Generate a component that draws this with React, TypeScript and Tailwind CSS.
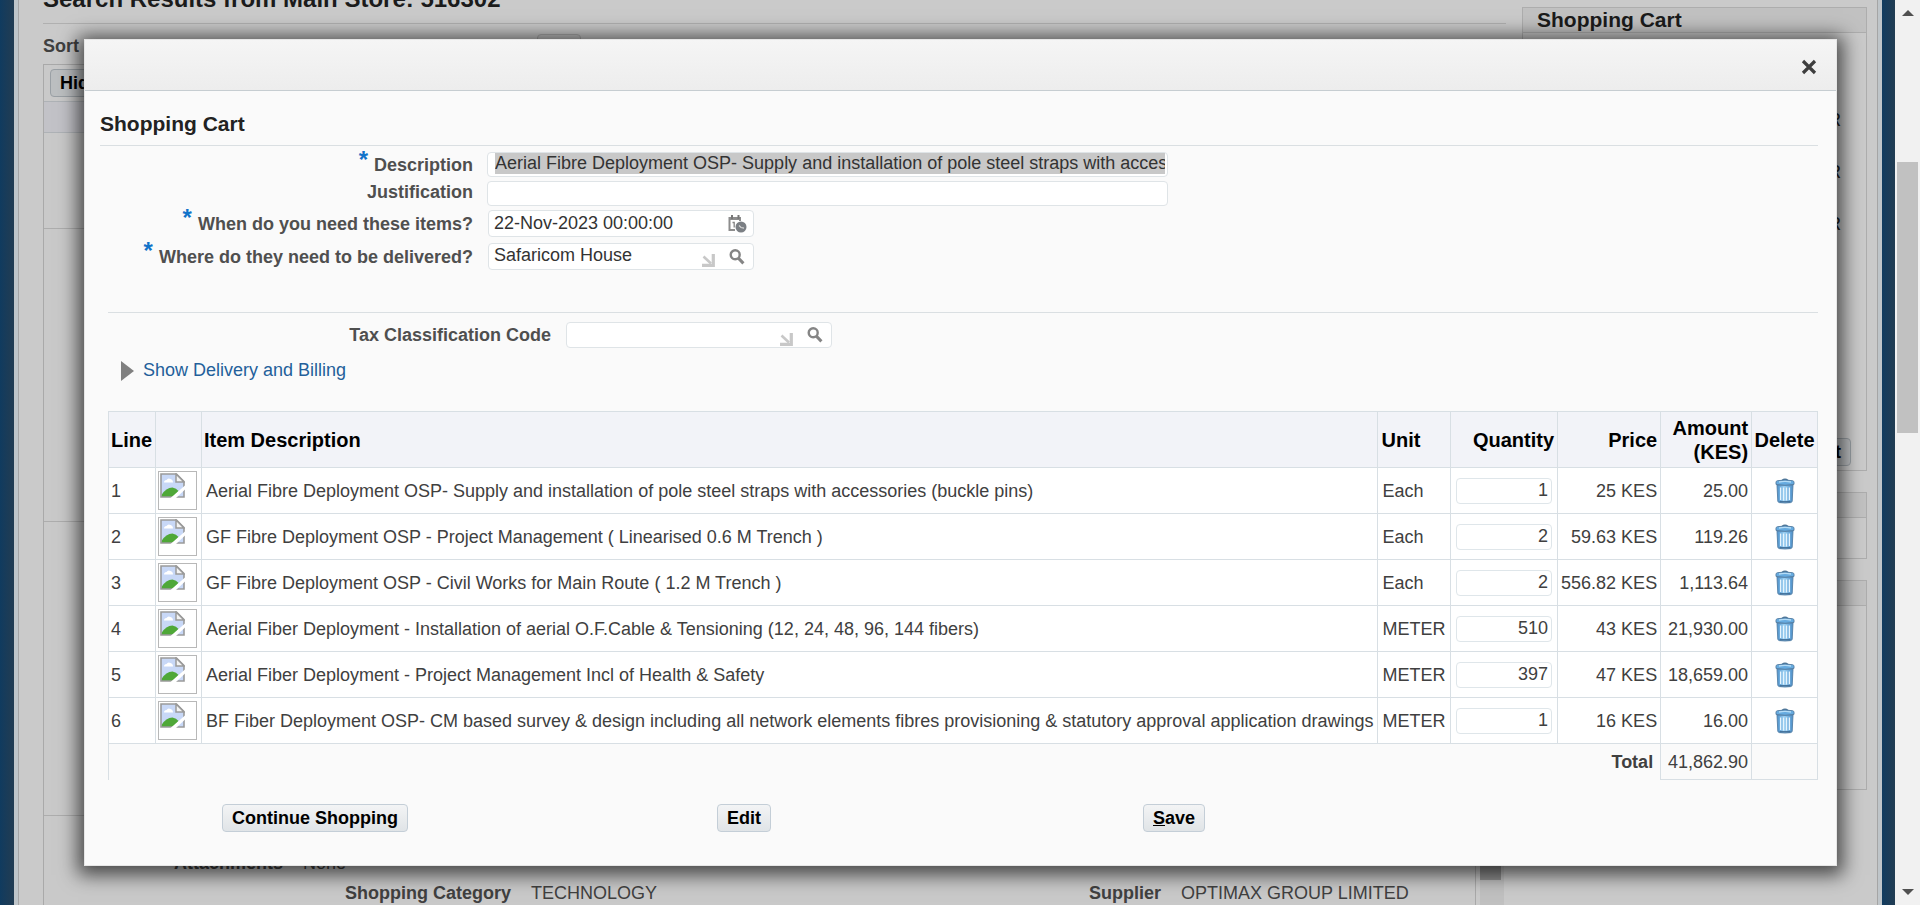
import React from "react";

const items = [
  { line: 1, desc: "Aerial Fibre Deployment OSP- Supply and installation of pole steel straps with accessories (buckle pins)", unit: "Each", qty: "1", price: "25 KES", amount: "25.00" },
  { line: 2, desc: "GF Fibre Deployment OSP - Project Management ( Linearised 0.6 M Trench )", unit: "Each", qty: "2", price: "59.63 KES", amount: "119.26" },
  { line: 3, desc: "GF Fibre Deployment OSP - Civil Works for Main Route ( 1.2 M Trench )", unit: "Each", qty: "2", price: "556.82 KES", amount: "1,113.64" },
  { line: 4, desc: "Aerial Fiber Deployment - Installation of aerial O.F.Cable & Tensioning (12, 24, 48, 96, 144 fibers)", unit: "METER", qty: "510", price: "43 KES", amount: "21,930.00" },
  { line: 5, desc: "Aerial Fiber Deployment - Project Management Incl of Health & Safety", unit: "METER", qty: "397", price: "47 KES", amount: "18,659.00" },
  { line: 6, desc: "BF Fiber Deployment OSP- CM based survey & design including all network elements fibres provisioning & statutory approval application drawings", unit: "METER", qty: "1", price: "16 KES", amount: "16.00" },
];

function SearchIcon() {
  return (
    <svg width="16" height="16" viewBox="0 0 16 16" fill="none" stroke="#858585" aria-hidden="true">
      <circle cx="6.2" cy="5.8" r="4.5" strokeWidth="2.4" />
      <path d="M9.6 9.4 14.4 14.4" strokeWidth="3" />
    </svg>
  );
}

function CornerArrow() {
  return (
    <svg width="13" height="13" viewBox="0 0 13 13" fill="none" stroke="#c8c8c8" aria-hidden="true">
      <path d="M1.500 2.500 9 9.500" strokeWidth="2.600" />
      <path d="M11.300 0V11.300H0" strokeWidth="3.200" />
    </svg>
  );
}

function CalendarIcon() {
  return (
    <svg width="19" height="18" viewBox="0 0 19 18" aria-hidden="true">
      <path d="M.5 2h12.500v4h-2V5H2.500v9H7v2H.5z" fill="#8d8d8d" />
      <path d="M3 0h2v4H3zM9.500 0h2v4h-2z" fill="#777" />
      <path d="M4.500 7.500h1.700v5" fill="none" stroke="#858585" strokeWidth="1.300" />
      <circle cx="13" cy="12" r="5.500" fill="#7b7f84" />
      <path d="M11 10.500l2 2 3 .6" fill="none" stroke="#d8d8d8" strokeWidth="1.100" />
    </svg>
  );
}

function TrashIcon() {
  return (
    <svg width="20" height="26" viewBox="0 0 20 26" aria-hidden="true">
      <defs>
        <linearGradient id="bin" x1="0" x2="1">
          <stop offset="0" stopColor="#4a8fca" />
          <stop offset=".45" stopColor="#9bd0f3" />
          <stop offset="1" stopColor="#4a8dc8" />
        </linearGradient>
      </defs>
      <path d="M7 2.6Q10 .2 13 2.6" fill="none" stroke="#4d7597" strokeWidth="1.6" />
      <path d="M2 7h16l-.8 16q-.1 1.400-1.600 1.600-5.600.8-11.200 0-1.500-.2-1.600-1.600z" fill="url(#bin)" stroke="#527fa6" strokeWidth=".9" />
      <path d="M5.600 9.500V22M8.500 9.500V22.500M11.500 9.500V22.500M14.400 9.500V22" stroke="#e6f4fd" strokeWidth="1.300" />
      <path d="M4.500 23.800h11" stroke="#3f6d96" strokeWidth="1.400" />
      <path d="M1 4.200Q1 3 2.400 2.700 10 1.400 17.600 2.700 19 3 19 4.200V6.400Q10 8.200 1 6.400z" fill="#66abe0" stroke="#527b9f" strokeWidth=".9" />
      <path d="M4 4Q10 2.800 16 4" fill="none" stroke="#b5dcf6" strokeWidth="1.300" />
    </svg>
  );
}

function BrokenImage() {
  return (
    <svg width="25" height="25" viewBox="0 0 25 25" aria-hidden="true">
      <path d="M1 1h15.500l7.500 7.500V24H1z" fill="#c8d8f7" />
      <path d="M4 9.500q0-2.500 2.500-2.500Q8 4.500 10.500 6 13 6.500 13 9.500z" fill="#fff" />
      <path d="M1.500 24V22Q6 14.500 12.500 14.500 16.500 15 18.500 18L13 24z" fill="#4fa838" />
      <path d="M1 1h15.500l7.500 7.500V24H1z" fill="none" stroke="#9a9a9a" strokeWidth="1.600" />
      <path d="M16 1v8h8z" fill="#f4f4f4" stroke="#9a9a9a" strokeWidth="1.500" />
      <path d="M10.500 25 25 12.500V16.500L16 25z" fill="#fff" />
    </svg>
  );
}

function Star() {
  return <span className="mr-1.5 self-start text-2xl leading-4 font-bold text-[#1273c9]">*</span>;
}

const field = "flex items-center rounded-sm border border-[#dfe4e7] bg-white";
const label = "flex w-[373px] shrink-0 items-center justify-end font-bold text-[#4f4f4f]";
const input = "min-w-0 bg-transparent text-[#333] outline-none";
const button = "h-7 rounded-sm border border-[#c4ced7] bg-linear-to-b from-[#f3f4f5] to-[#e0e4e7] px-[9px] font-bold text-black";
const cell = "border border-[#d8dfe4]";
const boxTitle = "h-[25px] border-b border-[#adadad] bg-[#c1c1c1] px-3.5 text-[21px] leading-6 font-bold text-[#1b1b1b]";

function SideBox({ className }: { className: string }) {
  return (
    <section className={"border border-[#adadad] " + className}>
      <div className={boxTitle} />
    </section>
  );
}

function StorePage() {
  return (
    <div className="flex h-full min-w-0 flex-1 bg-[#123a5b]" aria-hidden="true">
      <div className="w-3.5 shrink-0 bg-linear-to-r from-[#103b5f] to-[#213c52]" />
      <div className="flex min-w-0 flex-1 border-x-4 border-[#bfc5c9] bg-[#cacaca]">
        <div className="flex min-w-0 flex-1 border-x border-[#a5a5a5] pl-6">
          <main className="flex min-w-0 flex-1 flex-col">
            <div className="flex h-6 items-end border-b border-[#b0b0b0]">
              <h1 className="mb-3 text-2xl leading-6 font-bold text-[#1b1b1b]">Search Results from Main Store: 516302</h1>
            </div>
            <div className="flex h-10 pt-2.5">
              <span className="font-bold leading-6 text-[#404040]">Sort</span>
              <span className="ml-[458px] h-6 w-11 rounded-sm border border-[#aaa] bg-[#c3c3c3]" />
            </div>
            <div className="flex min-h-0 flex-1">
              <div className="flex min-w-0 flex-1 flex-col border border-b-0 border-[#a9a9a9] bg-[#c9c9c9]">
                <div className="flex h-[39px] items-center pl-1.5">
                  <span className="h-7 rounded-sm border border-[#9aa0a5] bg-[#bcbfc1] px-[9px] font-bold leading-[26px] text-black">Hide</span>
                </div>
                <div className="h-8 shrink-0 border-y border-[#aeb2b6] bg-[#c2c2c7]" />
                <div className="h-24 shrink-0 border-b border-[#adadad]" />
                <div className="h-[293px] shrink-0 border-b border-[#adadad]" />
                <div className="h-[294px] shrink-0 border-b border-[#adadad]" />
                <div className="flex h-[59px] shrink-0 items-end text-[#404040]">
                  <b className="w-[239px] text-right">Attachments</b>
                  <span className="ml-5">None</span>
                </div>
                <div className="flex h-[30px] shrink-0 items-end text-[#404040]">
                  <b className="w-[467px] text-right">Shopping Category</b>
                  <span className="ml-5 w-[450px]">TECHNOLOGY</span>
                  <b className="w-[180px] text-right">Supplier</b>
                  <span className="ml-5">OPTIMAX GROUP LIMITED</span>
                </div>
              </div>
              <div className="mr-0.5 ml-1 w-6 bg-[#c0c0c0]">
                <div className="h-[816px] w-[21px] bg-[#909090]" />
              </div>
            </div>
          </main>
          <aside className="mr-2.5 ml-4 flex w-[345px] flex-col pt-[7px]">
            <section className="flex h-[464px] flex-col border border-[#adadad]">
              <h2 className={boxTitle}>Shopping Cart</h2>
              <div className="mt-[75px] flex flex-1 flex-col gap-7 pr-[25px] text-right text-[#222]">
                <span>METER</span>
                <span>METER</span>
                <span>METER</span>
              </div>
              <span className="mr-[15px] mb-1 h-7 self-end rounded-sm border border-[#9aa0a5] bg-[#bcbfc1] px-[9px] font-bold leading-[26px] text-black">Checkout</span>
            </section>
            <SideBox className="mt-[21px] h-[67px]" />
            <SideBox className="mt-[21px] h-[210px]" />
          </aside>
        </div>
      </div>
      <div className="w-[13px] shrink-0 bg-linear-to-r from-[#103b5f] to-[#213c52]" />
    </div>
  );
}

function Scrollbar() {
  return (
    <div className="flex w-[25px] shrink-0 flex-col items-center justify-between bg-[#f1f1f1] py-2.5" aria-hidden="true">
      <div className="flex flex-col items-center">
        <svg width="12" height="6" viewBox="0 0 12 6"><path d="M0 6 6 0l6 6z" fill="#505050" /></svg>
        <div className="mt-[146px] h-[271px] w-[21px] bg-[#c1c1c1]" />
      </div>
      <svg width="12" height="6" viewBox="0 0 12 6"><path d="M0 0 6 6l6-6z" fill="#505050" /></svg>
    </div>
  );
}

function CartDialog() {
  return (
    <div role="dialog" aria-label="Shopping Cart" className="absolute top-[39px] right-[83px] left-[84px] border border-[#e6e6e6] bg-[#fafafa] shadow-[0_3px_18px_6px_rgba(0,0,0,0.65)]">
      <div className="flex h-[51px] items-center justify-end border-b border-[#c6cdd1] bg-linear-to-b from-[#f5f5f5] to-[#ededed] pt-1 pr-[19px]">
        <button type="button" aria-label="Close">
          <svg width="16" height="16" viewBox="0 0 16 16" stroke="#3e3e3e" strokeWidth="3.200"><path d="m2 2 12 12M14 2 2 14" /></svg>
        </button>
      </div>
      <div className="pt-[15px] pr-[18px] pb-[33px] pl-[15px]">
        <h1 className="h-10 border-b border-[#dadfe2] pt-1 text-[21px] leading-7 font-bold text-[#222]">Shopping Cart</h1>

        <div className="mt-1.5 flex flex-col">
          <div className="flex h-[29px]">
            <label htmlFor="description" className={label + " h-[26px]"}><Star />Description</label>
            <div className={field + " ml-3.5 h-[25px] w-[681px] pr-0.5 pb-0.5 pl-[7px]"}>
              <input id="description" readOnly className={input + " h-[21px] flex-1 bg-[#c8c8c8]! pb-0.5"} defaultValue={items[0].desc} />
            </div>
          </div>
          <div className="flex h-[29px]">
            <label htmlFor="justification" className={label + " h-[22px]"}>Justification</label>
            <div className={field + " ml-3.5 h-[25px] w-[681px] px-1.5"}>
              <input id="justification" className={input + " flex-1"} />
            </div>
          </div>
          <div className="flex h-[33px]">
            <label htmlFor="needby" className={label + " h-[27px]"}><Star />When do you need these items?</label>
            <div className={field + " ml-[15px] h-[27px] w-[266px] pr-1.5 pl-[5px]"}>
              <input id="needby" className={input + " h-6 flex-1 pb-0.5"} defaultValue="22-Nov-2023 00:00:00" />
              <button type="button" aria-label="Pick date"><CalendarIcon /></button>
            </div>
          </div>
          <div className="flex h-[33px]">
            <label htmlFor="deliver" className={label + " h-7"}><Star />Where do they need to be delivered?</label>
            <div className={field + " ml-[15px] h-[27px] w-[266px] pr-2 pl-[5px]"}>
              <input id="deliver" className={input + " h-6 flex-1 pb-1"} defaultValue="Safaricom House" />
              <span className="mr-3.5 pt-2"><CornerArrow /></span>
              <button type="button" aria-label="Search locations"><SearchIcon /></button>
            </div>
          </div>
        </div>

        <div className="ml-2">
          <div className="mt-9 flex h-9 border-t border-[#dadfe2] pt-[9px]">
            <label htmlFor="tax" className="flex w-[443px] shrink-0 items-center justify-end font-bold text-[#4f4f4f]">Tax Classification Code</label>
            <div className={field + " ml-[15px] h-[26px] w-[266px] pr-2 pl-1.5"}>
              <input id="tax" className={input + " flex-1"} />
              <span className="mr-3.5 pt-2"><CornerArrow /></span>
              <button type="button" aria-label="Search tax codes"><SearchIcon /></button>
            </div>
          </div>
          <div className="mt-[11px] flex h-6 items-center gap-[9px] pl-[13px]">
            <svg width="13" height="20" viewBox="0 0 13 20"><path d="M0 0v20L13 10z" fill="#808080" /></svg>
            <a href="#delivery" className="pb-0.5 text-[#235f9a]">Show Delivery and Billing</a>
          </div>

          <table className="mt-7 w-full border-collapse text-[#404040]">
            <thead>
              <tr className="h-14 bg-[#f2f3f8] text-[20px] leading-6 font-bold text-black">
                <th className={cell + " w-[47px] px-0.5 text-left"}>Line</th>
                <th className={cell + " w-[46px]"} aria-label="Image" />
                <th className={cell + " px-0.5 text-left"}>Item Description</th>
                <th className={cell + " w-[73px] px-[3px] text-left"}>Unit</th>
                <th className={cell + " w-[107px] px-[3px] text-right"}>Quantity</th>
                <th className={cell + " w-[102px] px-[3px] text-right"}>Price</th>
                <th className={cell + " w-[91px] px-[3px] text-right"}>Amount (KES)</th>
                <th className={cell + " w-[66px] text-center"}>Delete</th>
              </tr>
            </thead>
            <tbody className="bg-white">
              {items.map((it) => (
                <tr key={it.line} className="h-[46px]">
                  <td className={cell + " px-0.5"}>{it.line}</td>
                  <td className={cell + " px-0.5"}>
                    <div className="h-[39px] w-[39px] border border-[#b8b8b8] p-px"><BrokenImage /></div>
                  </td>
                  <td className={cell + " px-1 whitespace-nowrap"}>{it.desc}</td>
                  <td className={cell + " px-1"}>{it.unit}</td>
                  <td className={cell + " px-[5px]"}>
                    <input aria-label={"Quantity for line " + it.line} className="block h-[26px] w-full rounded-sm border border-[#dfe6ea] px-[3px] text-right" defaultValue={it.qty} />
                  </td>
                  <td className={cell + " px-[3px] text-right whitespace-nowrap"}>{it.price}</td>
                  <td className={cell + " px-[3px] text-right"}>{it.amount}</td>
                  <td className={cell + " text-center"}>
                    <button type="button" aria-label={"Delete line " + it.line} className="mx-auto block"><TrashIcon /></button>
                  </td>
                </tr>
              ))}
            </tbody>
            <tfoot>
              <tr className="h-9">
                <th colSpan={6} className="border-l border-[#d8dfe4] pr-[7px] text-right font-bold">Total</th>
                <td className={cell + " px-[3px] text-right"}>41,862.90</td>
                <td className={cell} />
              </tr>
            </tfoot>
          </table>

          <div className="mt-6 flex pl-[114px]">
            <div className="w-[495px]"><button type="button" className={button}>Continue Shopping</button></div>
            <div className="w-[426px]"><button type="button" className={button}>Edit</button></div>
            <button type="button" className={button}><u>S</u>ave</button>
          </div>
        </div>
      </div>
    </div>
  );
}

export default function App() {
  return (
    <div className="relative flex h-screen overflow-hidden font-['Liberation_Sans',Arial,sans-serif] text-[18px] leading-6">
      <StorePage />
      <Scrollbar />
      <CartDialog />
    </div>
  );
}
